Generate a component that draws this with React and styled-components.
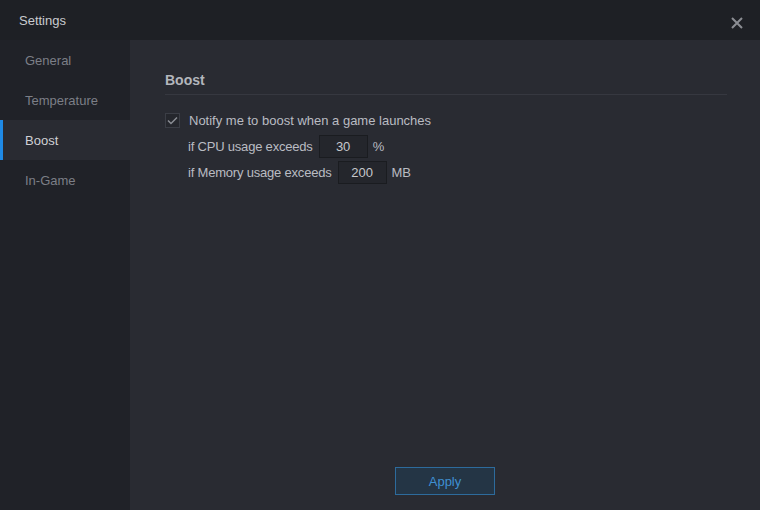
import styled, { createGlobalStyle } from 'styled-components';

const Global = createGlobalStyle`
  html, body { margin: 0; padding: 0; background: #1e2025; }
  body { font-family: "Liberation Sans", Arial, sans-serif; }
`;

const Window = styled.div`
  width: 760px;
  height: 510px;
  display: flex;
  flex-direction: column;
  background: #1e2025;
  overflow: hidden;
`;

const TitleBar = styled.div`
  height: 40px;
  flex: none;
  display: flex;
  align-items: center;
  justify-content: space-between;
  padding: 0 15px 0 19px;
  background: #1e2025;
`;

const Title = styled.div`
  font-size: 13px;
  color: #c9cbcf;
`;

const Close = styled.button`
  width: 16px;
  height: 16px;
  padding: 0;
  border: 0;
  background: transparent;
  display: flex;
  align-items: center;
  justify-content: center;
  margin-top: 5px;
`;

const Body = styled.div`
  flex: 1;
  display: flex;
  min-height: 0;
`;

const Sidebar = styled.nav`
  width: 130px;
  flex: none;
  background: #202228;
  display: flex;
  flex-direction: column;
`;

const NavItem = styled.div`
  height: 40px;
  display: flex;
  align-items: center;
  padding-left: 25px;
  font-size: 13px;
  color: ${(p) => (p.$active ? '#cfd1d5' : '#7c7f87')};
  background: ${(p) => (p.$active ? '#292b32' : 'transparent')};
  box-shadow: ${(p) => (p.$active ? 'inset 3px 0 0 #1f8ae6' : 'none')};
`;

const Content = styled.main`
  flex: 1;
  background: #292b32;
  display: flex;
  flex-direction: column;
  padding: 32px 33px 15px 35px;
`;

const Section = styled.div`
  flex: 1;
`;

const Heading = styled.h2`
  margin: 0;
  font-size: 14px;
  font-weight: bold;
  color: #b3b6bc;
  padding-bottom: 6px;
  border-bottom: 1px solid #363840;
`;

const CheckRow = styled.label`
  display: flex;
  align-items: center;
  gap: 9px;
  margin-top: 18px;
  font-size: 13px;
  color: #b9bcc2;
`;

const Box = styled.span`
  width: 13px;
  height: 13px;
  border: 1px solid #3b3e46;
  background: #25272d;
  display: flex;
  align-items: center;
  justify-content: center;
`;

const Rows = styled.div`
  padding-left: 23px;
  display: flex;
  flex-direction: column;
  gap: 3px;
  margin-top: 7px;
`;

const Row = styled.div`
  display: flex;
  align-items: center;
  gap: 5px;
  font-size: 13px;
  letter-spacing: -0.2px;
  color: #b9bcc2;
`;

const Field = styled.div`
  width: 47px;
  height: 21px;
  border: 1px solid #1a1c20;
  background: #24262c;
  color: #c6c8cc;
  font-size: 13px;
  letter-spacing: 0;
  display: flex;
  align-items: center;
  justify-content: center;
  margin-left: 1px;
`;

const Footer = styled.div`
  display: flex;
  justify-content: center;
  padding-right: 2px;
`;

const Apply = styled.button`
  width: 100px;
  height: 28px;
  border: 1px solid #2d6b9c;
  background: #243545;
  color: #3f90d2;
  font-family: inherit;
  font-size: 13px;
`;

const sections = ['General', 'Temperature', 'Boost', 'In-Game'];

export default function App() {
  return (
    <Window>
      <Global />
      <TitleBar>
        <Title>Settings</Title>
        <Close>
          <svg width="12" height="12" viewBox="0 0 12 12">
            <path d="M1 1L11 11M11 1L1 11" stroke="#8b8d93" strokeWidth="2" />
          </svg>
        </Close>
      </TitleBar>
      <Body>
        <Sidebar>
          {sections.map((s) => (
            <NavItem key={s} $active={s === 'Boost'}>
              {s}
            </NavItem>
          ))}
        </Sidebar>
        <Content>
          <Section>
            <Heading>Boost</Heading>
            <CheckRow>
              <Box>
                <svg width="11" height="9" viewBox="0 0 11 9">
                  <path d="M1 4.5L4 7.5L10 1.5" fill="none" stroke="#8a8d94" strokeWidth="1.5" />
                </svg>
              </Box>
              Notify me to boost when a game launches
            </CheckRow>
            <Rows>
              <Row>
                if CPU usage exceeds <Field>30</Field> %
              </Row>
              <Row>
                if Memory usage exceeds <Field>200</Field> MB
              </Row>
            </Rows>
          </Section>
          <Footer>
            <Apply>Apply</Apply>
          </Footer>
        </Content>
      </Body>
    </Window>
  );
}
